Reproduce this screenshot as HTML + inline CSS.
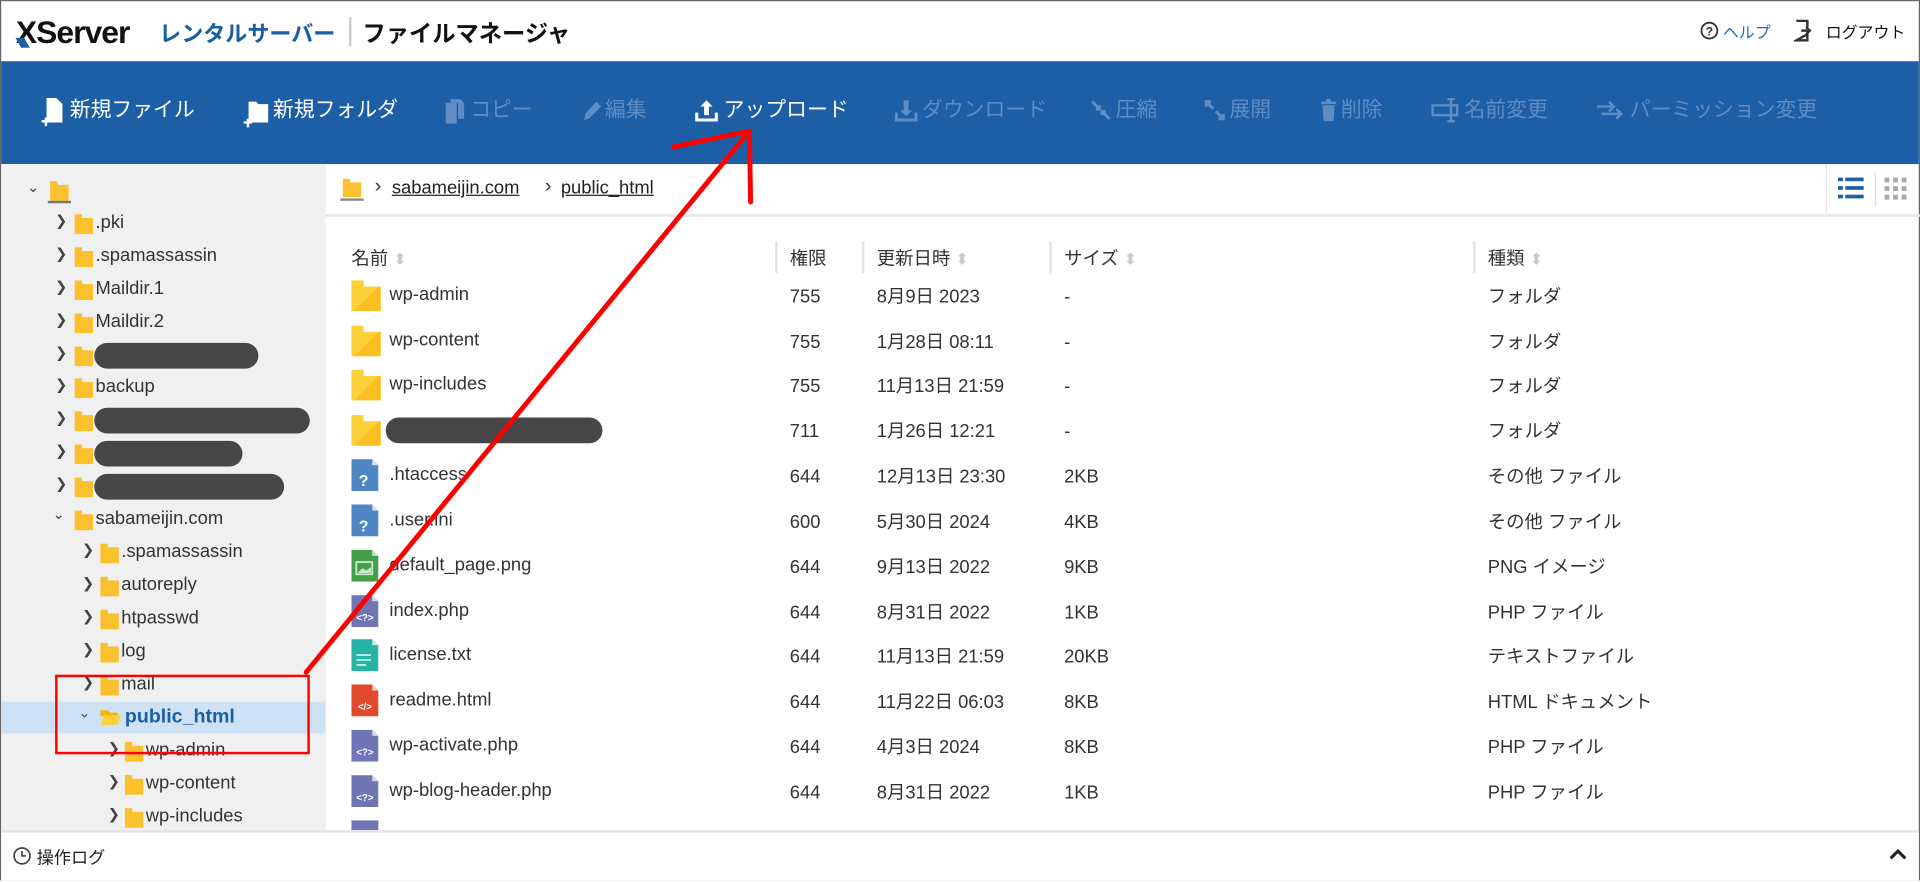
<!DOCTYPE html>
<html><head><meta charset="utf-8">
<style>
*{margin:0;padding:0;box-sizing:border-box}
html,body{width:1920px;height:880px;overflow:hidden;background:#fff}
#w{position:absolute;left:0;top:0;width:1568px;height:719px;transform:scale(1.22449);transform-origin:0 0;font-family:"Liberation Sans","Noto Sans CJK JP",sans-serif;color:#333;border:1px solid #666;background:#fff}
.a{position:absolute;white-space:nowrap}
.tb{position:absolute;left:0;top:49px;width:1566px;height:84px;background:#1c5fa7}
.ti{position:absolute;top:79px;font-size:17px;color:#fff;line-height:20px}
.dis{color:#5f8cc2}
.side{position:absolute;left:0;top:133px;width:265px;height:546px;background:#f0f0f0;overflow:hidden}
.r{position:absolute;font-size:15px;line-height:18px;color:#333}
.chev{position:absolute;font-size:12px;color:#444}
.fd{position:absolute;width:15px;height:13px;background:#fbc02d}
.fd:before{content:"";position:absolute;left:0;top:-3px;width:6px;height:4px;background:#fbc02d}
.pill{position:absolute;background:#474747;border-radius:11px;height:21px}
.th{position:absolute;top:199px;font-size:15px;color:#333}
.th span{color:#c8c8c8;font-size:13px}
.sep{position:absolute;top:196px;width:2px;height:26px;background:#e3e3e3}
.cell{position:absolute;font-size:15px;color:#333;line-height:18px}
.ic{position:absolute;left:286px;width:22px;height:26px}
.big{position:absolute;left:286px;width:24px;height:20px;background:linear-gradient(135deg,#fdd13a 50%,#fbbf22 50%)}
.big:before{content:"";position:absolute;left:0;top:-5px;width:10px;height:6px;background:#fdd13a}
</style></head><body><div id="w">
<!-- header -->
<div class="a" style="left:12px;top:10px;font-size:26px;font-weight:bold;color:#111;letter-spacing:-0.8px;line-height:30px">XServer</div>
<div class="a" style="left:14px;top:30px;width:7px;height:8px;background:#1a5ea8;transform:skewX(30deg)"></div>
<div class="a" style="left:129px;top:13px;font-size:18px;font-weight:bold;color:#1a5ea8">レンタルサーバー</div>
<div class="a" style="left:284px;top:13px;width:2px;height:24px;background:#ccc"></div>
<div class="a" style="left:295px;top:12px;font-size:19px;font-weight:bold;color:#111">ファイルマネージャ</div>
<svg class="a" style="left:1387px;top:16px" width="16" height="16"><circle cx="8" cy="8" r="6.5" fill="none" stroke="#333" stroke-width="1.5"/><text x="8" y="12" font-size="10" text-anchor="middle" font-family="Liberation Sans" font-weight="bold" fill="#333">?</text></svg>
<div class="a" style="left:1406px;top:15px;font-size:13px;color:#1a6fd0">ヘルプ</div>
<svg class="a" style="left:1464px;top:15px" width="16" height="18"><path d="M2 1h9v5M11 12v5H2z" fill="none" stroke="#333" stroke-width="2"/><path d="M6 9h6M10 6l3 3-3 3" fill="none" stroke="#333" stroke-width="2"/></svg>
<div class="a" style="left:1490px;top:15px;font-size:13px;color:#111">ログアウト</div>
<!-- toolbar -->
<div class="tb"></div>
<svg class="a" style="left:32px;top:78px" width="20" height="26"><path d="M5 1h8l5 5v15H5z" fill="#fff"/><path d="M1 20h7M4.5 17v7" stroke="#fff" stroke-width="2"/></svg>
<div class="ti" style="left:56px">新規ファイル</div>
<svg class="a" style="left:197px;top:80px" width="22" height="24"><path d="M5 2h6l2 2h8v15H5z" fill="#fff"/><path d="M1 19h7M4.5 16v7" stroke="#fff" stroke-width="2"/></svg>
<div class="ti" style="left:222px">新規フォルダ</div>
<svg class="a" style="left:361px;top:79px" width="18" height="22"><path d="M2 4h9v17H2z" fill="#5f8cc2"/><path d="M6 1h8l3 3v13H12V4H6z" fill="#5f8cc2"/></svg>
<div class="ti dis" style="left:383px">コピー</div>
<svg class="a" style="left:473px;top:80px" width="18" height="20"><path d="M3 17l1-5 9-10 4 4-10 10z" fill="#5f8cc2"/></svg>
<div class="ti dis" style="left:493px">編集</div>
<svg class="a" style="left:566px;top:79px" width="20" height="20"><path d="M2 12v6h16v-6" fill="none" stroke="#fff" stroke-width="2.5"/><path d="M10 2l-5 5h3v7h4V7h3z" fill="#fff"/></svg>
<div class="ti" style="left:590px">アップロード</div>
<svg class="a" style="left:729px;top:79px" width="20" height="20"><path d="M2 12v6h16v-6" fill="none" stroke="#5f8cc2" stroke-width="2.5"/><path d="M10 15l-5-5h3V2h4v8h3z" fill="#5f8cc2"/></svg>
<div class="ti dis" style="left:752px">ダウンロード</div>
<svg class="a" style="left:889px;top:80px" width="18" height="18"><path d="M2 2l6 6M16 16l-6-6M5 8h3V5M13 10h-3v3" stroke="#5f8cc2" stroke-width="2.5" fill="none"/></svg>
<div class="ti dis" style="left:910px">圧縮</div>
<svg class="a" style="left:982px;top:80px" width="18" height="18"><path d="M2 2l6 6M16 16l-6-6M2 6V2h4M16 12v4h-4" stroke="#5f8cc2" stroke-width="2.5" fill="none"/></svg>
<div class="ti dis" style="left:1003px">展開</div>
<svg class="a" style="left:1076px;top:79px" width="16" height="20"><path d="M2 4h12M6 2h4" stroke="#5f8cc2" stroke-width="2"/><path d="M3 6h10l-1 13H4z" fill="#5f8cc2"/></svg>
<div class="ti dis" style="left:1094px">削除</div>
<svg class="a" style="left:1167px;top:79px" width="26" height="20"><path d="M2 6h20v8H2z" fill="none" stroke="#5f8cc2" stroke-width="2"/><path d="M17 1v18M14 1h6M14 19h6" stroke="#5f8cc2" stroke-width="2"/></svg>
<div class="ti dis" style="left:1195px">名前変更</div>
<svg class="a" style="left:1301px;top:79px" width="26" height="20"><path d="M2 7h14M12 3l4 4-4 4M6 13h16M18 9l4 4-4 4" stroke="#5f8cc2" stroke-width="2" fill="none"/></svg>
<div class="ti dis" style="left:1330px">パーミッション変更</div>
<!-- sidebar -->
<div class="side">
<div style="position:absolute;left:0;top:439px;width:265px;height:26px;background:#cfe2f5"></div>
</div>
<div class="chev" style="left:21px;top:145px">&#8964;</div>
<div class="fd" style="left:40px;top:150px"></div><div class="a" style="left:38px;top:163px;width:19px;height:2px;background:#777"></div>
<div class="chev" style="left:44px;top:172px">&#x276F;</div><div class="fd" style="left:60px;top:177px"></div><div class="r" style="left:77px;top:172px">.pki</div>
<div class="chev" style="left:44px;top:199px">&#x276F;</div><div class="fd" style="left:60px;top:204px"></div><div class="r" style="left:77px;top:199px">.spamassassin</div>
<div class="chev" style="left:44px;top:226px">&#x276F;</div><div class="fd" style="left:60px;top:231px"></div><div class="r" style="left:77px;top:226px">Maildir.1</div>
<div class="chev" style="left:44px;top:253px">&#x276F;</div><div class="fd" style="left:60px;top:258px"></div><div class="r" style="left:77px;top:253px">Maildir.2</div>
<div class="chev" style="left:44px;top:280px">&#x276F;</div><div class="fd" style="left:60px;top:285px"></div><div class="pill" style="left:76px;top:279px;width:134px"></div>
<div class="chev" style="left:44px;top:306px">&#x276F;</div><div class="fd" style="left:60px;top:311px"></div><div class="r" style="left:77px;top:306px">backup</div>
<div class="chev" style="left:44px;top:333px">&#x276F;</div><div class="fd" style="left:60px;top:338px"></div><div class="pill" style="left:76px;top:332px;width:176px"></div>
<div class="chev" style="left:44px;top:360px">&#x276F;</div><div class="fd" style="left:60px;top:365px"></div><div class="pill" style="left:76px;top:359px;width:121px"></div>
<div class="chev" style="left:44px;top:387px">&#x276F;</div><div class="fd" style="left:60px;top:392px"></div><div class="pill" style="left:76px;top:386px;width:155px"></div>
<div class="chev" style="left:42px;top:412px">&#8964;</div><div class="fd" style="left:60px;top:419px"></div><div class="r" style="left:77px;top:414px">sabameijin.com</div>
<div class="chev" style="left:66px;top:441px">&#x276F;</div><div class="fd" style="left:81px;top:446px"></div><div class="r" style="left:98px;top:441px">.spamassassin</div>
<div class="chev" style="left:66px;top:468px">&#x276F;</div><div class="fd" style="left:81px;top:473px"></div><div class="r" style="left:98px;top:468px">autoreply</div>
<div class="chev" style="left:66px;top:495px">&#x276F;</div><div class="fd" style="left:81px;top:500px"></div><div class="r" style="left:98px;top:495px">htpasswd</div>
<div class="chev" style="left:66px;top:522px">&#x276F;</div><div class="fd" style="left:81px;top:527px"></div><div class="r" style="left:98px;top:522px">log</div>
<div class="chev" style="left:66px;top:549px">&#x276F;</div><div class="fd" style="left:81px;top:554px"></div><div class="r" style="left:98px;top:549px">mail</div>
<div class="chev" style="left:63px;top:574px;color:#1a5ea8">&#8964;</div>
<svg class="a" style="left:80px;top:577px" width="18" height="15"><path d="M1 2h6l2 2h6v3H1z" fill="#f5b400"/><path d="M1 14l3-8h14l-3 8z" fill="#fdd13a"/></svg>
<div class="r" style="left:101px;top:576px;font-weight:bold;color:#1a5ea8;font-size:16px">public_html</div>
<div class="chev" style="left:87px;top:603px">&#x276F;</div><div class="fd" style="left:101px;top:608px"></div><div class="r" style="left:118px;top:603px">wp-admin</div>
<div class="chev" style="left:87px;top:630px">&#x276F;</div><div class="fd" style="left:101px;top:635px"></div><div class="r" style="left:118px;top:630px">wp-content</div>
<div class="chev" style="left:87px;top:657px">&#x276F;</div><div class="fd" style="left:101px;top:662px"></div><div class="r" style="left:118px;top:657px">wp-includes</div>
<!-- breadcrumb -->
<div class="fd" style="left:279px;top:148px;width:15px;height:12px"></div><div class="a" style="left:277px;top:161px;width:19px;height:2px;background:#888"></div>
<div class="a" style="left:305px;top:143px;font-size:16px">&#x203A;</div>
<div class="a" style="left:319px;top:144px;font-size:15px;text-decoration:underline;color:#222">sabameijin.com</div>
<div class="a" style="left:444px;top:143px;font-size:16px">&#x203A;</div>
<div class="a" style="left:457px;top:144px;font-size:15px;text-decoration:underline;color:#222">public_html</div>
<div class="a" style="left:265px;top:174px;width:1302px;height:2px;background:#e5e5e5"></div>
<div class="a" style="left:1490px;top:133px;width:1px;height:42px;background:#e5e5e5"></div>
<svg class="a" style="left:1500px;top:143px" width="22" height="20"><g fill="#1c5fa7"><rect x="0" y="1" width="4" height="3"/><rect x="6" y="1" width="15" height="3"/><rect x="0" y="8" width="4" height="3"/><rect x="6" y="8" width="15" height="3"/><rect x="0" y="15" width="4" height="3"/><rect x="6" y="15" width="15" height="3"/></g></svg>
<div class="a" style="left:1530px;top:140px;width:1px;height:28px;background:#ddd"></div>
<svg class="a" style="left:1538px;top:143px" width="22" height="20"><g fill="#aaa"><rect x="0" y="1" width="4" height="4"/><rect x="7" y="1" width="4" height="4"/><rect x="14" y="1" width="4" height="4"/><rect x="0" y="8" width="4" height="4"/><rect x="7" y="8" width="4" height="4"/><rect x="14" y="8" width="4" height="4"/><rect x="0" y="15" width="4" height="4"/><rect x="7" y="15" width="4" height="4"/><rect x="14" y="15" width="4" height="4"/></g></svg>
<!-- table head -->
<div class="th" style="left:286px">名前 <span>&#x2B0D;</span></div>
<div class="sep" style="left:632px"></div><div class="th" style="left:644px">権限</div>
<div class="sep" style="left:703px"></div><div class="th" style="left:715px">更新日時 <span>&#x2B0D;</span></div>
<div class="sep" style="left:856px"></div><div class="th" style="left:868px">サイズ <span>&#x2B0D;</span></div>
<div class="sep" style="left:1202px"></div><div class="th" style="left:1214px">種類 <span>&#x2B0D;</span></div>
<!-- rows -->
<div class="big" style="top:233px"></div><div class="cell" style="left:317px;top:231px">wp-admin</div><div class="cell" style="left:644px;top:233px">755</div><div class="cell" style="left:715px;top:233px">8月9日 2023</div><div class="cell" style="left:868px;top:233px">-</div><div class="cell" style="left:1214px;top:233px">フォルダ</div>
<div class="big" style="top:270px"></div><div class="cell" style="left:317px;top:268px">wp-content</div><div class="cell" style="left:644px;top:270px">755</div><div class="cell" style="left:715px;top:270px">1月28日 08:11</div><div class="cell" style="left:868px;top:270px">-</div><div class="cell" style="left:1214px;top:270px">フォルダ</div>
<div class="big" style="top:306px"></div><div class="cell" style="left:317px;top:304px">wp-includes</div><div class="cell" style="left:644px;top:306px">755</div><div class="cell" style="left:715px;top:306px">11月13日 21:59</div><div class="cell" style="left:868px;top:306px">-</div><div class="cell" style="left:1214px;top:306px">フォルダ</div>
<div class="big" style="top:343px"></div><div class="pill" style="left:314px;top:340px;width:177px"></div><div class="cell" style="left:644px;top:343px">711</div><div class="cell" style="left:715px;top:343px">1月26日 12:21</div><div class="cell" style="left:868px;top:343px">-</div><div class="cell" style="left:1214px;top:343px">フォルダ</div>
<svg class="ic" style="top:374px"><path d="M0 0h17l5 5v21H0z" fill="#4f86c3"/><path d="M17 0v5h5z" fill="#cfe0f3"/><text x="10" y="22" font-size="13" font-weight="bold" fill="#fff" text-anchor="middle" font-family="Liberation Sans">?</text></svg><div class="cell" style="left:317px;top:378px">.htaccess</div><div class="cell" style="left:644px;top:380px">644</div><div class="cell" style="left:715px;top:380px">12月13日 23:30</div><div class="cell" style="left:868px;top:380px">2KB</div><div class="cell" style="left:1214px;top:380px">その他 ファイル</div>
<svg class="ic" style="top:411px"><path d="M0 0h17l5 5v21H0z" fill="#4f86c3"/><path d="M17 0v5h5z" fill="#cfe0f3"/><text x="10" y="22" font-size="13" font-weight="bold" fill="#fff" text-anchor="middle" font-family="Liberation Sans">?</text></svg><div class="cell" style="left:317px;top:415px">.user.ini</div><div class="cell" style="left:644px;top:417px">600</div><div class="cell" style="left:715px;top:417px">5月30日 2024</div><div class="cell" style="left:868px;top:417px">4KB</div><div class="cell" style="left:1214px;top:417px">その他 ファイル</div>
<svg class="ic" style="top:448px"><path d="M0 0h17l5 5v21H0z" fill="#43a047"/><path d="M17 0v5h5z" fill="#c8e6c9"/><rect x="4" y="10" width="13" height="10" fill="none" stroke="#c8e6c9" stroke-width="1.5"/><path d="M5 19l4-4 3 2 4-3v5z" fill="#c8e6c9"/></svg><div class="cell" style="left:317px;top:452px">default_page.png</div><div class="cell" style="left:644px;top:454px">644</div><div class="cell" style="left:715px;top:454px">9月13日 2022</div><div class="cell" style="left:868px;top:454px">9KB</div><div class="cell" style="left:1214px;top:454px">PNG イメージ</div>
<svg class="ic" style="top:485px"><path d="M0 0h17l5 5v21H0z" fill="#7075b5"/><path d="M17 0v5h5z" fill="#d4d6ee"/><text x="11" y="21" font-size="8" font-weight="bold" fill="#fff" text-anchor="middle" font-family="Liberation Sans">&lt;?&gt;</text></svg><div class="cell" style="left:317px;top:489px">index.php</div><div class="cell" style="left:644px;top:491px">644</div><div class="cell" style="left:715px;top:491px">8月31日 2022</div><div class="cell" style="left:868px;top:491px">1KB</div><div class="cell" style="left:1214px;top:491px">PHP ファイル</div>
<svg class="ic" style="top:521px"><path d="M0 0h17l5 5v21H0z" fill="#26b5a5"/><path d="M17 0v5h5z" fill="#c2ece7"/><path d="M4 13h12M4 17h12M4 21h8" stroke="#c2ece7" stroke-width="1.5"/></svg><div class="cell" style="left:317px;top:525px">license.txt</div><div class="cell" style="left:644px;top:527px">644</div><div class="cell" style="left:715px;top:527px">11月13日 21:59</div><div class="cell" style="left:868px;top:527px">20KB</div><div class="cell" style="left:1214px;top:527px">テキストファイル</div>
<svg class="ic" style="top:558px"><path d="M0 0h17l5 5v21H0z" fill="#e2492a"/><path d="M17 0v5h5z" fill="#f7cbbf"/><text x="11" y="21" font-size="8" font-weight="bold" fill="#fff" text-anchor="middle" font-family="Liberation Sans">&lt;/&gt;</text></svg><div class="cell" style="left:317px;top:562px">readme.html</div><div class="cell" style="left:644px;top:564px">644</div><div class="cell" style="left:715px;top:564px">11月22日 06:03</div><div class="cell" style="left:868px;top:564px">8KB</div><div class="cell" style="left:1214px;top:564px">HTML ドキュメント</div>
<svg class="ic" style="top:595px"><path d="M0 0h17l5 5v21H0z" fill="#7075b5"/><path d="M17 0v5h5z" fill="#d4d6ee"/><text x="11" y="21" font-size="8" font-weight="bold" fill="#fff" text-anchor="middle" font-family="Liberation Sans">&lt;?&gt;</text></svg><div class="cell" style="left:317px;top:599px">wp-activate.php</div><div class="cell" style="left:644px;top:601px">644</div><div class="cell" style="left:715px;top:601px">4月3日 2024</div><div class="cell" style="left:868px;top:601px">8KB</div><div class="cell" style="left:1214px;top:601px">PHP ファイル</div>
<svg class="ic" style="top:632px"><path d="M0 0h17l5 5v21H0z" fill="#7075b5"/><path d="M17 0v5h5z" fill="#d4d6ee"/><text x="11" y="21" font-size="8" font-weight="bold" fill="#fff" text-anchor="middle" font-family="Liberation Sans">&lt;?&gt;</text></svg><div class="cell" style="left:317px;top:636px">wp-blog-header.php</div><div class="cell" style="left:644px;top:638px">644</div><div class="cell" style="left:715px;top:638px">8月31日 2022</div><div class="cell" style="left:868px;top:638px">1KB</div><div class="cell" style="left:1214px;top:638px">PHP ファイル</div>
<div class="a" style="left:286px;top:669px;width:22px;height:8px;background:#7075b5"></div>
<!-- bottom -->
<div class="a" style="left:0;top:677px;width:1566px;height:41px;background:#fff;border-top:2px solid #e3e3e3"></div>
<svg class="a" style="left:9px;top:690px" width="16" height="16"><circle cx="8" cy="8" r="6.5" fill="none" stroke="#444" stroke-width="1.4"/><path d="M8 4v4h3" stroke="#444" stroke-width="1.4" fill="none"/></svg>
<div class="a" style="left:29px;top:689px;font-size:14px;color:#222">操作ログ</div>
<svg class="a" style="left:1541px;top:692px" width="16" height="10"><path d="M2 8l6-6 6 6" stroke="#222" stroke-width="2.5" fill="none"/></svg>
<!-- annotation -->
<svg class="a" style="left:0;top:0" width="1568" height="719"><rect x="45" y="551" width="206" height="63" fill="none" stroke="#f00" stroke-width="2"/><path d="M249 548L611 106M549 119L611 106L612 164" fill="none" stroke="#f00" stroke-width="4" stroke-linecap="round" stroke-linejoin="round"/></svg>
</div></body></html>
